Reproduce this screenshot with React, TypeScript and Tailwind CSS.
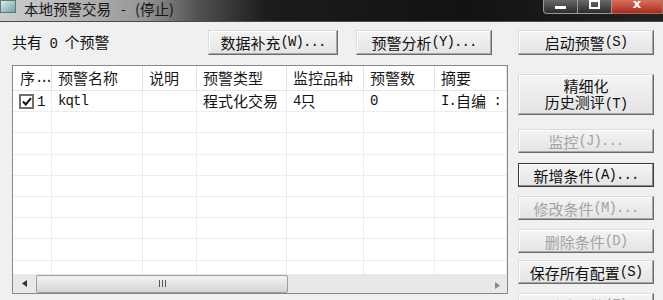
import React from 'react'

const font = "font-['Noto_Sans_CJK_SC','Noto_Sans_CJK_JP',sans-serif]"

// SimSun-ish: CJK glyphs full width, ASCII half width in a serif mono
function t(s: string) {
  return s.split(/([\x20-\x7e]+)/).map((part, i) =>
    /[\x20-\x7e]/.test(part) ? (
      <span key={i} className="font-['Liberation_Mono',monospace] text-[14px] tracking-[-0.9px] whitespace-pre">
        {part}
      </span>
    ) : (
      part
    )
  )
}

const cols = [
  { label: '序', w: 'w-[39px]' },
  { label: '预警名称', w: 'w-[91px]' },
  { label: '说明', w: 'w-[54px]' },
  { label: '预警类型', w: 'w-[90px]' },
  { label: '监控品种', w: 'w-[77px]' },
  { label: '预警数', w: 'w-[71px]' },
  { label: '摘要', w: 'flex-1' },
]

function Btn({ label, disabled, focused, className = '' }: { label: React.ReactNode; disabled?: boolean; focused?: boolean; className?: string }) {
  return (
    <div
      className={`flex items-center justify-center text-[15px] leading-[17px] text-center whitespace-nowrap bg-gradient-to-b from-[#f4f4f4] to-[#e4e4e4] border ${
        focused
          ? 'border-[#3a3a3a] shadow-[inset_-1px_-1px_0_#8a8a8a,inset_1px_1px_0_#ffffff]'
          : 'border-t-[#dcdcdc] border-l-[#dcdcdc] border-r-[#6a6a6a] border-b-[#6a6a6a] shadow-[inset_-1px_-1px_0_#a8a8a8,inset_1px_1px_0_#ffffff]'
      } ${disabled ? 'text-[#a3a3a3]' : 'text-[#111]'} ${className}`}
    >
      {label}
    </div>
  )
}

function Check() {
  return (
    <span className="inline-flex w-[15px] h-[15px] border-2 border-[#6e6e6e] bg-white items-center justify-center shrink-0">
      <svg width="10" height="9" viewBox="0 0 10 9">
        <path d="M1 4.5 L3.8 7.5 L9 1.2" fill="none" stroke="#111" strokeWidth="2" />
      </svg>
    </span>
  )
}

function TitleBar() {
  return (
    <div className="relative h-[22px] border-b border-[#4a4a4a] bg-[linear-gradient(to_right,#cdcdcd_0%,#b4b4b4_12%,#949494_22%,#505050_30%,#1c1c1c_40%,#121212_70%,#222_100%)] flex items-center">
      <div className="w-[16px] h-[13px] -mt-[8px] bg-gradient-to-br from-[#dfe9ea] to-[#6fa3a6] border border-[#5a7a7c]" />
      <div className={`ml-[8px] -mt-[3px] flex text-[14.5px] leading-[18px] text-[#141414] ${font}`}>
        <span>本地预警交易</span>
        <span className="ml-[10px]">-</span>
        <span className="ml-[9px]">(停止)</span>
      </div>
      <div className="absolute right-0 top-0 flex h-[14px]">
        <div className="w-[35px] h-full bg-gradient-to-b from-[#6a6a6a] to-[#2c2c2c] border border-t-0 border-[#9a9a9a] rounded-bl-[4px] flex items-center justify-center">
          <div className="w-[11px] h-[3px] bg-white mt-[2px]" />
        </div>
        <div className="w-[34px] h-full bg-gradient-to-b from-[#6a6a6a] to-[#2c2c2c] border border-t-0 border-l-0 border-[#9a9a9a] flex items-center justify-center">
          <div className="w-[11px] h-[9px] border-2 border-white -mt-[4px]" />
        </div>
        <div className="w-[51px] h-full bg-gradient-to-b from-[#d9705e] to-[#a8281a] border border-t-0 border-l-0 border-[#b06a60] flex items-center justify-center">
          <span className="text-white font-bold text-[13px] leading-none -mt-[6px] font-['DejaVu_Sans',sans-serif]">x</span>
        </div>
      </div>
    </div>
  )
}

function ListView() {
  const rows = Array.from({ length: 9 })
  return (
    <div className="mt-[10px] w-[496px] h-[229px] border border-[#828790] bg-white flex flex-col overflow-hidden">
      <div className="flex h-[25px] border-b border-[#e5e5e5] shrink-0">
        {cols.map((c, i) => (
          <div key={i} className={`${c.w} h-full border-r border-[#e3e3e3] flex items-center text-[15px] text-[#1a1a1a] whitespace-nowrap overflow-hidden ${i === 0 ? 'pl-[7px]' : 'pl-[6px]'}`}>
            {c.label}
            {i === 0 && <span className="font-['Liberation_Mono',monospace] text-[14px] tracking-[-3.5px]">...</span>}
          </div>
        ))}
      </div>
      <div className="flex-1 overflow-hidden">
        {rows.map((_, r) => (
          <div key={r} className="flex h-[21.2px] border-b border-[#ededed]">
            {cols.map((c, i) => (
              <div key={i} className={`${c.w} h-full border-r border-[#ededed] flex items-center text-[15px] text-[#111] whitespace-nowrap overflow-hidden pl-[6px]`}>
                {r === 0 && i === 0 && (
                  <>
                    <Check />
                    <span className="ml-[3px]">{t('1')}</span>
                  </>
                )}
                {r === 0 && i === 1 && t('kqtl')}
                {r === 0 && i === 3 && '程式化交易'}
                {r === 0 && i === 4 && t('4只')}
                {r === 0 && i === 5 && t('0')}
                {r === 0 && i === 6 && t('I.自编 :')}
              </div>
            ))}
          </div>
        ))}
      </div>
      <div className="h-[19px] shrink-0 bg-[#e8e8e8] flex items-center">
        <div className="w-[23px] flex items-center justify-center">
          <svg width="5" height="7" viewBox="0 0 5 7"><path d="M5 0 L0 3.5 L5 7Z" fill="#333" /></svg>
        </div>
        <div className="w-[252px] h-[18px] border border-[#9c9c9c] rounded-[2px] bg-gradient-to-b from-[#f3f3f3] to-[#d4d4d4] flex items-center justify-center">
          <div className="flex gap-[2px]">
            <div className="w-px h-[7px] bg-[#555]" />
            <div className="w-px h-[7px] bg-[#555]" />
            <div className="w-px h-[7px] bg-[#555]" />
          </div>
        </div>
        <div className="flex-1" />
        <div className="w-[20px] flex items-center justify-center mt-[4px]">
          <svg width="5" height="7" viewBox="0 0 5 7"><path d="M0 0 L5 3.5 L0 7Z" fill="#8a8a8a" /></svg>
        </div>
      </div>
    </div>
  )
}

export default function App() {
  return (
    <div className={`w-[663px] h-[300px] bg-[#f0f0f0] overflow-hidden ${font}`}>
      <TitleBar />
      <div className="flex pl-[12px] pt-[8px]">
        <div className="w-[496px] flex flex-col">
          <div className="flex items-center h-[25px]">
            <span className="text-[15px] text-[#111] whitespace-pre">{t('共有 0 个预警')}</span>
            <Btn label={t('数据补充(W)...')} className="ml-auto w-[130px] h-[25px]" />
            <Btn label={t('预警分析(Y)...')} className="ml-[18px] mr-[16px] w-[136px] h-[25px]" />
          </div>
          <ListView />
        </div>
        <div className="ml-[10px] w-[136px] flex flex-col">
          <Btn label={t('启动预警(S)')} className="h-[25px]" />
          <Btn label={<span className="leading-[16px]">精细化<br />{t('历史测评(T)')}</span>} className="mt-[19px] h-[41px]" />
          <Btn label={t('监控(J)...')} disabled className="mt-[14px] h-[24px]" />
          <Btn label={t('新增条件(A)...')} focused className="mt-[10px] h-[24px]" />
          <Btn label={t('修改条件(M)...')} disabled className="mt-[9px] h-[24px]" />
          <Btn label={t('删除条件(D)')} disabled className="mt-[9px] h-[24px]" />
          <Btn label={t('保存所有配置(S)')} className="mt-[7px] h-[24px]" />
          <Btn label={t('删除预警(E)')} disabled className="mt-[9px] h-[24px]" />
        </div>
      </div>
    </div>
  )
}
